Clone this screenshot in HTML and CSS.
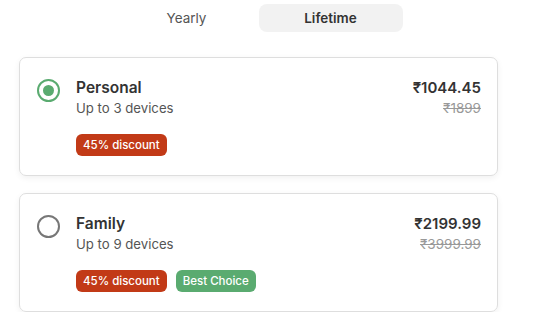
FILE: index.html
```html
<!DOCTYPE html>
<html lang="en">
<head>
  <meta charset="UTF-8">
  <meta name="viewport" content="width=device-width, initial-scale=1.0">
  <title>Plans</title>
  <link rel="stylesheet" href="styles.css">
</head>
<body>
  <div class="tabs">
    <button class="tab">Yearly</button>
    <button class="tab active">Lifetime</button>
  </div>

  <div class="plans">
    <label class="plan">
      <span class="radio checked"></span>
      <div class="plan-info">
        <div class="plan-name">Personal</div>
        <div class="plan-devices">Up to 3 devices</div>
        <div class="badges">
          <span class="badge discount">45% discount</span>
        </div>
      </div>
      <div class="plan-price">
        <div class="price">₹1044.45</div>
        <div class="old-price">₹1899</div>
      </div>
    </label>

    <label class="plan">
      <span class="radio"></span>
      <div class="plan-info">
        <div class="plan-name">Family</div>
        <div class="plan-devices">Up to 9 devices</div>
        <div class="badges">
          <span class="badge discount">45% discount</span>
          <span class="badge best">Best Choice</span>
        </div>
      </div>
      <div class="plan-price">
        <div class="price">₹2199.99</div>
        <div class="old-price">₹3999.99</div>
      </div>
    </label>
  </div>
</body>
</html>
```

FILE: styles.css
```css
body {
  margin: 0;
  padding: 4px 50px 0 19px;
  font-family: Inter, "Noto Sans", sans-serif;
  background: #fff;
  color: #333;
}

.tabs {
  display: flex;
  justify-content: center;
  margin-bottom: 25px;
}

.tab {
  width: 144px;
  height: 28px;
  border: none;
  border-radius: 8px;
  background: transparent;
  font-family: inherit;
  font-size: 13.5px;
  color: #555;
  cursor: pointer;
}

.tab.active {
  background: #f2f2f2;
  font-weight: 600;
  color: #333;
}

.plans {
  display: flex;
  flex-direction: column;
  gap: 17px;
}

.plan {
  display: flex;
  align-items: flex-start;
  padding: 20px 16px 19px 17px;
  border: 1px solid #dedede;
  border-radius: 7px;
  box-shadow: 0 2px 6px rgba(0, 0, 0, 0.06);
  cursor: pointer;
}

.radio {
  flex: none;
  box-sizing: border-box;
  width: 23px;
  height: 23px;
  margin-top: 1px;
  margin-right: 16px;
  border: 2px solid #777;
  border-radius: 50%;
  display: flex;
  align-items: center;
  justify-content: center;
}

.radio.checked {
  border-color: #5aab70;
}

.radio.checked::after {
  content: "";
  width: 11px;
  height: 11px;
  border-radius: 50%;
  background: #5aab70;
}

.plan-info {
  flex: 1;
}

.plan-name {
  font-size: 15.5px;
  line-height: 20px;
  font-weight: 600;
  color: #333;
}

.plan-devices {
  font-size: 13.2px;
  line-height: 20px;
  color: #555;
}

.badges {
  display: flex;
  gap: 9px;
  margin-top: 16px;
}

.badge {
  padding: 0 7px;
  height: 22px;
  line-height: 22px;
  border-radius: 6px;
  font-size: 11.5px;
  font-weight: 500;
  color: #fff;
}

.badge.discount {
  background: #c23a17;
}

.badge.best {
  background: #5aab70;
}

.plan-price {
  text-align: right;
}

.price {
  font-size: 15px;
  line-height: 20px;
  font-weight: 600;
  color: #333;
}

.old-price {
  font-size: 13.5px;
  line-height: 20px;
  color: #999;
  text-decoration: line-through;
}
```
